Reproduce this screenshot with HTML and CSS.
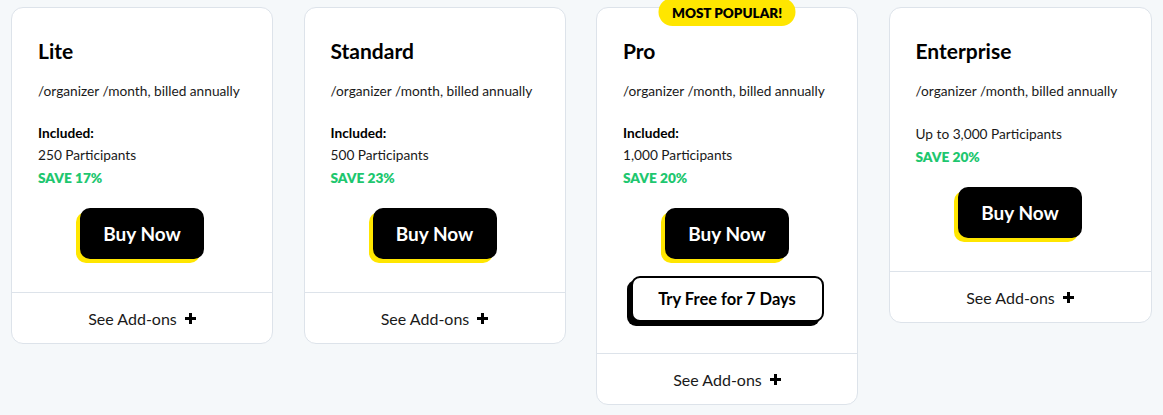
FILE: index.html
```html
<!DOCTYPE html>
<html>
<head>
<meta charset="utf-8">
<link rel="stylesheet" href="styles.css">
</head>
<body>
<div class="plans">
  <div class="card">
    <div class="body">
      <h2 class="title">Lite</h2>
      <p class="billing">/organizer /month, billed annually</p>
      <p class="included">Included:</p>
      <p class="count">250 Participants</p>
      <p class="save">SAVE 17%</p>
      <div class="actions"><a class="buy">Buy Now</a></div>
    </div>
    <div class="foot">See Add-ons <span class="plus"></span></div>
  </div>
  <div class="card">
    <div class="body">
      <h2 class="title">Standard</h2>
      <p class="billing">/organizer /month, billed annually</p>
      <p class="included">Included:</p>
      <p class="count">500 Participants</p>
      <p class="save">SAVE 23%</p>
      <div class="actions"><a class="buy">Buy Now</a></div>
    </div>
    <div class="foot">See Add-ons <span class="plus"></span></div>
  </div>
  <div class="card popular">
    <div class="badge">MOST POPULAR!</div>
    <div class="body">
      <h2 class="title">Pro</h2>
      <p class="billing">/organizer /month, billed annually</p>
      <p class="included">Included:</p>
      <p class="count">1,000 Participants</p>
      <p class="save">SAVE 20%</p>
      <div class="actions">
        <a class="buy">Buy Now</a>
        <a class="trial">Try Free for 7 Days</a>
      </div>
    </div>
    <div class="foot">See Add-ons <span class="plus"></span></div>
  </div>
  <div class="card">
    <div class="body">
      <h2 class="title">Enterprise</h2>
      <p class="billing">/organizer /month, billed annually</p>
      <p class="count upto">Up to 3,000 Participants</p>
      <p class="save">SAVE 20%</p>
      <div class="actions"><a class="buy">Buy Now</a></div>
    </div>
    <div class="foot">See Add-ons <span class="plus"></span></div>
  </div>
</div>
</body>
</html>
```
FILE: styles.css
```css
* { box-sizing: border-box; }
html, body { margin: 0; padding: 0; }
body {
  background: #f5f8fa;
  font-family: Lato, "Liberation Sans", sans-serif;
  color: #1a1a1a;
  width: 1163px;
  height: 415px;
  overflow: hidden;
}
.plans {
  display: flex;
  align-items: flex-start;
  gap: 30.5px;
  padding: 7px 0 0 11px;
}
.card {
  position: relative;
  width: 262px;
  background: #fff;
  border: 1px solid #dde3ea;
  border-radius: 12px;
  display: flex;
  flex-direction: column;
}
.card:last-child { width: 263px; }
.body {
  padding: 31px 26px 33px;
}
.popular .body { padding-bottom: 31px; }
.title {
  margin: 0;
  font-size: 21px;
  line-height: 24px;
  font-weight: 700;
  color: #000;
}
.billing {
  margin: 19px 0 0;
  font-size: 13.7px;
  line-height: 18px;
}
.included {
  margin: 24px 0 0;
  font-size: 13.7px;
  line-height: 18px;
  font-weight: 700;
  color: #000;
}
.count {
  margin: 4px 0 0;
  font-size: 13.7px;
  line-height: 18px;
}
.count.upto { margin-top: 25px; }
.save {
  margin: 5px 0 0;
  font-size: 13.7px;
  line-height: 18px;
  font-weight: 800;
  color: #1ec76f;
}
.actions {
  display: flex;
  flex-direction: column;
  align-items: center;
  gap: 17px;
  margin-top: 21px;
}
.buy {
  display: flex;
  align-items: center;
  justify-content: center;
  width: 124px;
  height: 51px;
  background: #000;
  color: #fff;
  border-radius: 10px;
  box-shadow: -4px 4px 0 #ffe600;
  font-size: 19px;
  font-weight: 700;
}
.trial {
  display: flex;
  align-items: center;
  justify-content: center;
  width: 193px;
  height: 46px;
  background: #fff;
  color: #000;
  border: 2px solid #000;
  border-radius: 9px;
  box-shadow: -4px 4px 0 #000;
  font-size: 16.5px;
  font-weight: 700;
}
.foot {
  border-top: 1px solid #dde3ea;
  height: 51px;
  display: flex;
  align-items: center;
  justify-content: center;
  gap: 8px;
  font-size: 16px;
  color: #1a1a1a;
}
.plus {
  position: relative;
  width: 11px;
  height: 11px;
  display: inline-block;
}
.plus::before, .plus::after {
  content: "";
  position: absolute;
  background: #000;
}
.plus::before { left: 0; top: 4px; width: 11px; height: 3px; }
.plus::after { left: 4px; top: 0; width: 3px; height: 11px; }
.badge {
  position: absolute;
  top: -10px;
  left: 50%;
  transform: translateX(-50%);
  width: 137px;
  height: 28px;
  padding-top: 8px;
  background: #ffe600;
  border-radius: 14px;
  text-align: center;
  font-size: 13.5px;
  font-weight: 800;
  color: #000;
  line-height: 14px;
}
```
